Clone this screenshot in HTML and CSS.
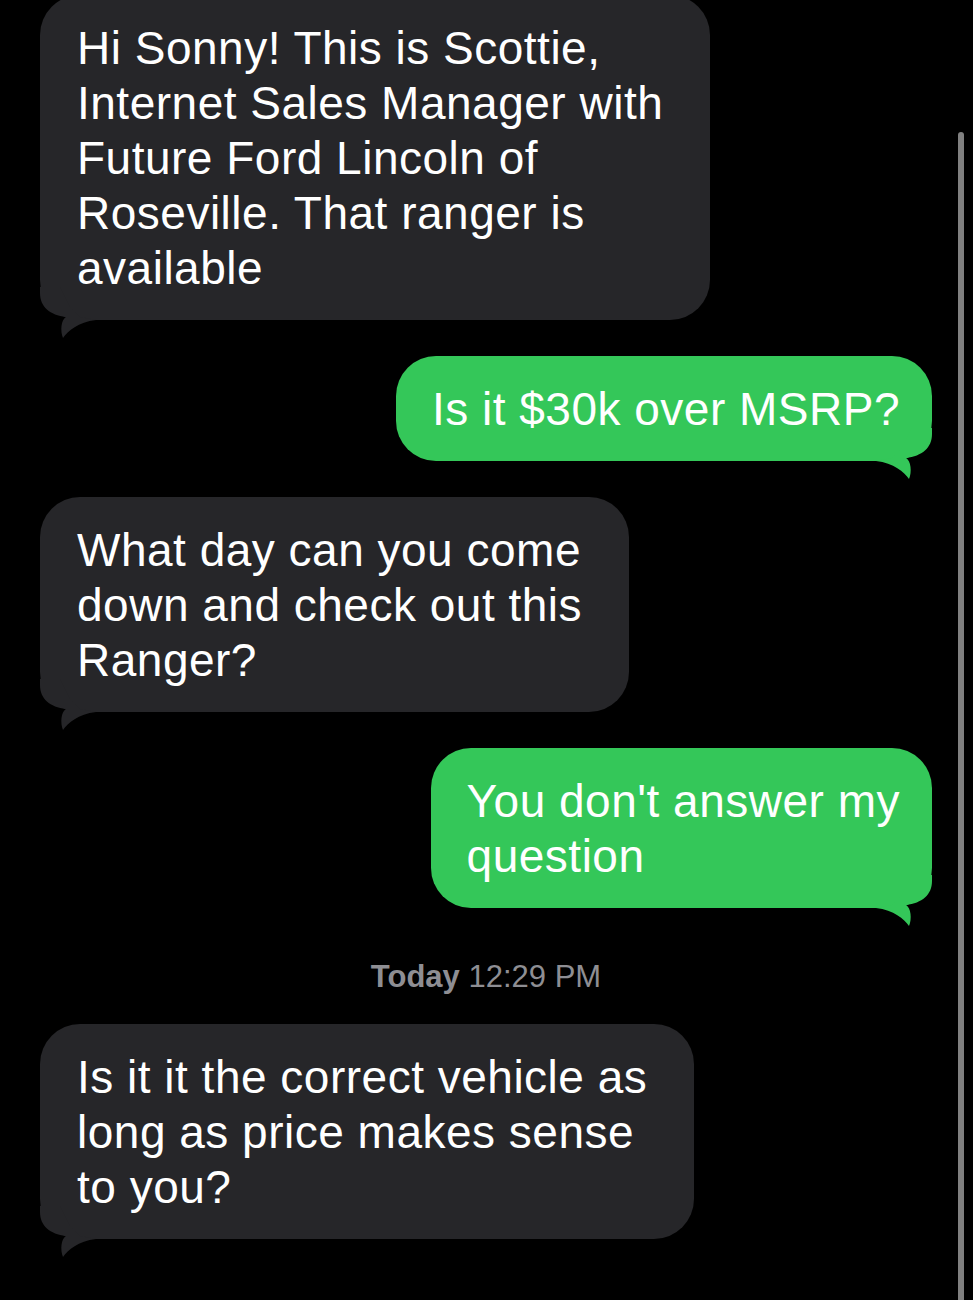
FILE: index.html
```html
<!DOCTYPE html>
<html lang="en">
<head>
    <meta charset="UTF-8"/>
    <meta name="viewport" content="width=device-width, initial-scale=1.0"/>
    <title>Messages</title>
    <link rel="stylesheet" href="styles.css">
</head>
<body>

<div class="thread">
    <div class="bubble received">
        Hi Sonny! This is Scottie,<br>
        Internet Sales Manager with<br>
        Future Ford Lincoln of<br>
        Roseville. That ranger is<br>
        available
        <svg class="tail" width="64" height="52" viewBox="0 0 64 52"><path d="M0,0 L0,6 C0,20 10,28 26,30 C21,33 20,44 23,51 C28,44 38,35 56,33 L40,30 L30,20 L20,0 Z"/></svg>
    </div>

    <div class="bubble sent">
        Is it $30k over MSRP?
        <svg class="tail" width="64" height="52" viewBox="0 0 64 52"><path d="M0,0 L0,6 C0,20 10,28 26,30 C21,33 20,44 23,51 C28,44 38,35 56,33 L40,30 L30,20 L20,0 Z"/></svg>
    </div>

    <div class="bubble received">
        What day can you come<br>
        down and check out this<br>
        Ranger?
        <svg class="tail" width="64" height="52" viewBox="0 0 64 52"><path d="M0,0 L0,6 C0,20 10,28 26,30 C21,33 20,44 23,51 C28,44 38,35 56,33 L40,30 L30,20 L20,0 Z"/></svg>
    </div>

    <div class="bubble sent">
        You don't answer my<br>
        question
        <svg class="tail" width="64" height="52" viewBox="0 0 64 52"><path d="M0,0 L0,6 C0,20 10,28 26,30 C21,33 20,44 23,51 C28,44 38,35 56,33 L40,30 L30,20 L20,0 Z"/></svg>
    </div>

    <div class="timestamp"><strong>Today</strong> 12:29 PM</div>

    <div class="bubble received">
        Is it it the correct vehicle as<br>
        long as price makes sense<br>
        to you?
        <svg class="tail" width="64" height="52" viewBox="0 0 64 52"><path d="M0,0 L0,6 C0,20 10,28 26,30 C21,33 20,44 23,51 C28,44 38,35 56,33 L40,30 L30,20 L20,0 Z"/></svg>
    </div>
</div>

<div class="scrollbar"></div>

</body>
</html>
```

FILE: styles.css
```css
* {
    box-sizing: border-box;
}

html, body {
    background: #000;
}

body {
    margin: 0;
    font-family: "Liberation Sans", Arial, sans-serif;
    color: #fff;
    overflow: hidden;
}

.thread {
    padding: 0 41px 0 40px;
    margin-top: -5px;
}

.bubble {
    position: relative;
    width: fit-content;
    margin-bottom: 36px;
    padding: 26px 47px 24px 37px;
    border-radius: 40px;
    font-size: 46px;
    line-height: 55px;
    letter-spacing: 0.5px;
    white-space: nowrap;
}

.bubble.received {
    background: #262629;
}

.bubble.sent {
    margin-left: auto;
    padding: 26px 32px 24px 36px;
    background: #34c759;
}

.tail {
    position: absolute;
    bottom: -19px;
    left: 0;
}

.received .tail {
    fill: #262629;
}

.sent .tail {
    left: auto;
    right: 0;
    fill: #34c759;
    transform: scaleX(-1);
}

.timestamp {
    margin: 51px 0 29px;
    text-align: center;
    font-size: 31px;
    line-height: 36px;
    color: #8e8e93;
}

.timestamp strong {
    font-weight: 600;
}

.scrollbar {
    position: fixed;
    top: 132px;
    bottom: -10px;
    right: 9px;
    width: 6px;
    border-radius: 3px;
    background: #808080;
}
```
